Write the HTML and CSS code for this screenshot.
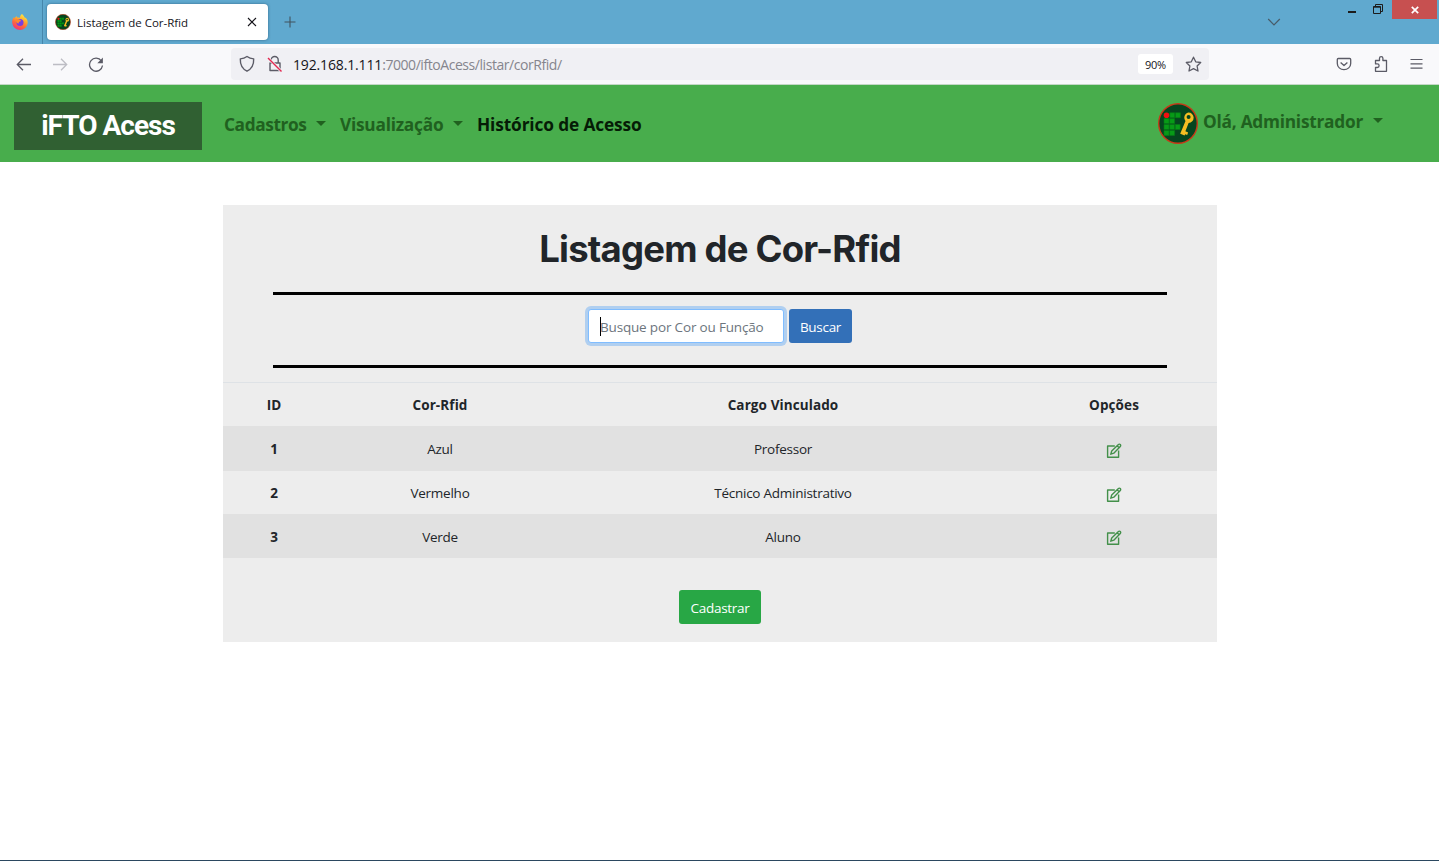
FILE: index.html
```html
<!DOCTYPE html>
<html lang="pt-BR">
<head>
<meta charset="utf-8">
<title>Listagem de Cor-Rfid</title>
<link rel="stylesheet" href="styles.css">
</head>
<body>
<svg class="defs" width="0" height="0">
  <defs>
    <linearGradient id="flame" x1="0.8" y1="0" x2="0.3" y2="1">
      <stop offset="0" stop-color="#fff04a"/><stop offset="0.35" stop-color="#ffb02e"/><stop offset="0.65" stop-color="#ff6a3a"/><stop offset="1" stop-color="#f0307a"/>
    </linearGradient>
    <symbol id="badge" viewBox="0 0 40 41">
      <ellipse cx="20" cy="20.5" rx="19.3" ry="19.8" fill="#06451f" stroke="#c83818" stroke-width="1.4"/>
      <g fill="#079b17" stroke="#067818" stroke-width=".6">
        <path d="M11.800 9.700h5v5h-5zM17.400 9.700h5v5h-5zM6 15.600h5v5H6zM11.600 15.600h5v5h-5zM6 21.500h5v5H6zM11.600 21.500h5v5h-5zM17.200 21.500h5v5h-5zM6 27.400h5v5H6zM11.600 27.400h5v5h-5z"/>
      </g>
      <circle cx="8.500" cy="12.300" r="2.800" fill="#f01010"/>
      <path fill="#f5bd22" fill-rule="evenodd" d="M30.300 9.500a5.200 5.200 0 1 1 .3 10.400l-3.200 8.400 2.700 1.100-.9 2.500-2-.7-.6 1.200-4.400-1.600 5.300-12.900a5.200 5.200 0 0 1 2.800-8.400zM30.600 12a2 2 0 1 0 0 4 2 2 0 0 0 0-4z"/>
    </symbol>
    <symbol id="edit" viewBox="0 0 16 16">
      <path d="M8.800 3H1.600v11.200h11V7.600" fill="none" stroke="#43904a" stroke-width="1.400" stroke-linejoin="round"/>
      <path d="M4.800 11.200l.9-3.200 6.700-6.400a1.300 1.300 0 0 1 1.900 1.900L7.800 10.200zM11.200 2.800l1.900 1.900" fill="none" stroke="#43904a" stroke-width="1.400" stroke-linejoin="round"/>
    </symbol>
  </defs>
</svg>

<div class="tabbar">
  <div class="pinned">
    <svg width="18" height="18" viewBox="0 0 18 18">
      <path fill="url(#flame)" d="M11 1c1 1 2 2 2.400 3.200.7.2 1.400.6 1.700 1.100 1.200 1.400 1.700 3 1.600 4.700A7.800 7.800 0 0 1 1.200 10C1 7.500 1.600 5.600 3 4c0 .5.100.8.300 1.200C4 4.300 4.800 3.600 5.800 3.200l.3 1.400c1 0 2 .1 2.600.4C9 3.500 9.600 2 11 1z"/>
      <circle cx="9" cy="9.600" r="3.500" fill="#7a3fe0"/>
      <path fill="#ff8a2c" d="M4.800 6.500c1.600-1 3.200-.4 4.200.4 1.300.1 1.300 1.300 0 1.600-1 .3-1.600 1-1.200 2-1.600 0-2.700-.8-3-4z"/>
    </svg>
  </div>
  <div class="tab">
    <svg class="favicon" width="16" height="16"><use href="#badge"/></svg>
    <span class="tab-title">Listagem de Cor-Rfid</span>
    <svg class="tab-close" width="10" height="10" viewBox="0 0 10 10"><path d="M1 1l8 8M9 1L1 9" stroke="#15141a" stroke-width="1.100"/></svg>
  </div>
  <svg class="newtab" width="12" height="12" viewBox="0 0 12 12"><path d="M6 0.500v11M.5 6h11" stroke="#41535f" stroke-width="1.100"/></svg>
  <svg class="alltabs" width="14" height="8" viewBox="0 0 14 8"><path d="M1.200 1l5.800 5.800L12.800 1" fill="none" stroke="#485b68" stroke-width="1.200"/></svg>
  <div class="window-controls">
    <svg width="8" height="20" viewBox="0 0 8 20"><path d="M0 12h8" stroke="#1c1c1c" stroke-width="2"/></svg>
    <svg width="10" height="20" viewBox="0 0 10 20"><path d="M.5 6.500h7v7h-7zM0 7.200h8M2.500 6V4.500h7v7H8" fill="none" stroke="#1c1c1c"/></svg>
    <div class="win-close"><svg width="8" height="8" viewBox="0 0 8 8"><path d="M.8.8l6.400 6.400M7.200.8L.8 7.200" stroke="#fff" stroke-width="1.700"/></svg></div>
  </div>
</div>

<div class="toolbar">
  <div class="nav-icons">
    <svg width="16" height="16" viewBox="0 0 16 16"><path d="M15 8.500H1.500M7 2.800L1.300 8.500 7 14.200" fill="none" stroke="#5b5b66" stroke-width="1.300"/></svg>
    <svg width="16" height="16" viewBox="0 0 16 16"><path d="M1 8.500h13.500M9 2.800l5.700 5.700L9 14.200" fill="none" stroke="#bdbdc4" stroke-width="1.300"/></svg>
    <svg width="16" height="16" viewBox="0 0 16 16"><path d="M13.400 5A6.500 6.500 0 1 0 14.500 9.500" fill="none" stroke="#5b5b66" stroke-width="1.300"/><path d="M14.900 1.500v5.800H9.300z" fill="#5b5b66"/></svg>
  </div>
  <div class="urlbar">
    <svg class="shield" width="16" height="18" viewBox="0 0 16 18"><path d="M8 1.500c2 1.500 4.200 2.200 6.700 2.400.2 5.500-1.600 9.800-6.700 12.300C2.900 13.700 1.100 9.400 1.300 3.900 3.800 3.700 6 3 8 1.500z" fill="none" stroke="#5b5b66" stroke-width="1.400" stroke-linejoin="round"/></svg>
    <svg class="lock" width="16" height="18" viewBox="0 0 16 18"><path d="M4.200 8V5a3.500 3.500 0 0 1 7 0v3M3 8h10v7.500H3z" fill="none" stroke="#5b5b66" stroke-width="1.400" stroke-linejoin="round"/><path d="M1 3L14.500 16.500" stroke="#f0f0f4" stroke-width="3"/><path d="M1 3L14.500 16.500" stroke="#e22850" stroke-width="1.400"/></svg>
    <span class="url"><span class="host">192.168.1.111</span>:7000/iftoAcess/listar/corRfid/</span>
    <span class="zoom">90%</span>
    <svg class="star" width="17" height="17" viewBox="0 0 17 17"><path d="M8.500 1.200l2.200 4.600 5 .7-3.600 3.500.9 5-4.500-2.400L4 15l.9-5L1.300 6.500l5-.7z" fill="none" stroke="#5b5b66" stroke-width="1.300" stroke-linejoin="round"/></svg>
  </div>
  <div class="tool-icons">
    <svg width="16" height="16" viewBox="0 0 16 16"><path d="M2.300 2.500h11.400q1 0 1 1v4a6.700 6.200 0 0 1-13.400 0v-4q0-1 1-1zM4.600 6.500L8 9.600l3.400-3.100" fill="none" stroke="#5b5b66" stroke-width="1.300" stroke-linejoin="round"/></svg>
    <svg width="16" height="18" viewBox="0 0 16 18"><path d="M2.500 5.500h4V3.300a1.700 1.700 0 0 1 3.400 0v2.200h3.600v10.800h-11v-3.800h1.800a1.700 1.700 0 0 0 0-3.600H2.500z" fill="none" stroke="#5b5b66" stroke-width="1.300" stroke-linejoin="round"/></svg>
    <svg width="13" height="12" viewBox="0 0 13 12"><path d="M.5 1.500h12M.5 5.800h12M.5 10.200h12" stroke="#5b5b66" stroke-width="1.200"/></svg>
  </div>
</div>

<nav class="navbar">
  <a class="brand"><span class="brand-text">iFTO Acess</span></a>
  <a class="nav-link cadastros">Cadastros</a><i class="caret"></i>
  <a class="nav-link visual">Visualização</a><i class="caret"></i>
  <a class="nav-link active">Histórico de Acesso</a>
  <div class="user">
    <svg class="avatar" width="40" height="41"><use href="#badge"/></svg>
    <a class="nav-link ola">Olá, Administrador</a><i class="caret"></i>
  </div>
</nav>

<main class="panel">
  <h1 class="title">Listagem de Cor-Rfid</h1>
  <div class="rule"></div>
  <form class="search">
    <div class="field"><span class="cursor"></span><span class="placeholder">Busque por Cor ou Função</span></div>
    <button class="btn primary" type="button">Buscar</button>
  </form>
  <div class="rule"></div>
  <div class="table">
    <div class="row head"><span>ID</span><span>Cor-Rfid</span><span>Cargo Vinculado</span><span>Opções</span></div>
    <div class="row r1 odd"><b>1</b><span>Azul</span><span>Professor</span><svg width="16" height="16"><use href="#edit"/></svg></div>
    <div class="row r2"><b>2</b><span>Vermelho</span><span>Técnico Administrativo</span><svg width="16" height="16"><use href="#edit"/></svg></div>
    <div class="row r3 odd"><b>3</b><span>Verde</span><span>Aluno</span><svg width="16" height="16"><use href="#edit"/></svg></div>
  </div>
  <button class="btn success" type="button">Cadastrar</button>
</main>
<div class="taskbar-edge"></div>
</body>
</html>
```
FILE: styles.css
```css
* { box-sizing: border-box; }
body {
  margin: 0;
  height: 861px;
  overflow: hidden;
  display: flex;
  flex-direction: column;
  background: #fff;
  color: #212529;
  font-family: "Open Sans", "Noto Sans", sans-serif;
  font-size: 13.5px;
}
.defs { position: absolute; }
svg { display: block; flex: none; }

.tabbar { height: 44px; background: #60a9cf; display: flex; align-items: center; flex: none; }
.pinned { width: 43px; height: 44px; border-right: 1px solid #4686ab; display: flex; align-items: center; padding-left: 11px; }
.tab {
  width: 221px; height: 36px; margin-left: 4px; padding: 0 11px 0 8px;
  display: flex; align-items: center; gap: 6px;
  background: #fff; border-radius: 4px; box-shadow: 0 0 3px rgba(20, 60, 90, .6);
}
.tab-title { font-size: 11.5px; color: #15141a; white-space: nowrap; }
.tab-close { margin-left: auto; }
.newtab { margin-left: 16px; }
.alltabs { margin-left: auto; margin-right: 67px; }
.window-controls { align-self: flex-start; display: flex; gap: 17px; padding-right: 2px; }
.win-close { width: 45px; height: 19px; margin-left: -8px; background: #c75050; display: flex; align-items: center; justify-content: center; }

.toolbar { height: 41px; background: #f9f9fb; border-bottom: 1px solid #c4d8c6; display: flex; align-items: center; flex: none; }
.nav-icons { width: 231px; padding-left: 16px; display: flex; gap: 20px; }
.urlbar { width: 978px; height: 32px; padding: 0 8px; background: #f0f0f4; border-radius: 4px; display: flex; align-items: center; }
.lock { margin-left: 12px; }
.url { margin-left: 10px; padding-top: 1px; font-size: 14px; color: #85858d; white-space: nowrap; letter-spacing: -.44px; }
.host { color: #15141a; letter-spacing: -.15px; }
.zoom { width: 35px; height: 20px; margin-left: auto; border-radius: 3px; background: #fff; color: #15141a; font-size: 11px; line-height: 21px; text-align: center; letter-spacing: -.3px; }
.star { margin-left: 12px; margin-right: -1px; }
.urlbar .zoom { position: relative; }
.tool-icons { margin-left: auto; padding-right: 16px; display: flex; align-items: center; gap: 21px; }

.navbar { height: 77px; background: #48ad4c; display: flex; align-items: center; padding-left: 14px; flex: none; }
.brand { width: 188px; height: 48px; margin: 4px 22px 0 0; background: #306032; display: flex; align-items: center; justify-content: center; }
.brand-text { color: #fff; font: 700 28px/1 Roboto, sans-serif; letter-spacing: -1px; white-space: nowrap; }
.nav-link { color: #20611f; font-size: 17.3px; font-weight: 700; line-height: 24px; white-space: nowrap; padding-top: 2px; }
.cadastros { width: 83px; letter-spacing: -.4px; }
.visual { width: 104px; letter-spacing: -.25px; }
.caret { width: 0; height: 0; margin: 0 14px 0 9px; border: 5px solid transparent; border-top-color: #20611f; border-bottom: 0; }
.nav-link.active { color: #051c06; letter-spacing: -.13px; }
.user { margin-left: auto; padding-right: 42px; display: flex; align-items: center; }
.user .nav-link { margin: -6px 0 0 5px; letter-spacing: -.25px; }
.user .caret { margin-top: -6px; margin-left: 10px; }

.panel { width: 994px; height: 437px; margin: 43px auto 0 223px; background: #ededed; display: flex; flex-direction: column; align-items: center; flex: none; }
.title { margin: 0; height: 87px; padding-top: 23px; font: 700 36.500px/43px Inter, sans-serif; letter-spacing: -.8px; white-space: nowrap; }
.rule { width: 894px; height: 3px; background: #000; flex: none; }
.search { height: 70px; margin: 0; padding-top: 14px; display: flex; gap: 5px; }
.field { width: 196px; height: 34px; padding-left: 11px; border: 1px solid #80bdff; border-radius: 3px; background: #fff; box-shadow: 0 0 0 3px #b0cff0; display: flex; align-items: center; }
.cursor { width: 1px; height: 19px; margin-right: -1px; background: #000; }
.placeholder { color: #6c757d; white-space: nowrap; padding-top: 2px; letter-spacing: -.17px; }
.btn { height: 34px; padding: 2px 0 0; border: 0; border-radius: 3px; color: #fff; font: 13.5px/20px "Open Sans", sans-serif; letter-spacing: -.3px; }
.primary { width: 63px; background: #3370b8; }
.table { width: 994px; margin-top: 14px; letter-spacing: -.25px; }
.row { height: 44px; display: grid; grid-template-columns: 102px 230px 456px 206px; align-items: center; justify-items: center; padding-top: 1px; }
.row svg { margin-top: 3px; }
.head { border-top: 1px solid #dee2e6; font-weight: 700; letter-spacing: .1px; }
.r1 { height: 45px; }
.r2 { height: 43px; }
.odd { background: #e1e1e1; }
.success { width: 82px; margin-top: 32px; background: #28a745; flex: none; }
.taskbar-edge { height: 1px; margin-top: auto; background: #2b4860; flex: none; }
```
